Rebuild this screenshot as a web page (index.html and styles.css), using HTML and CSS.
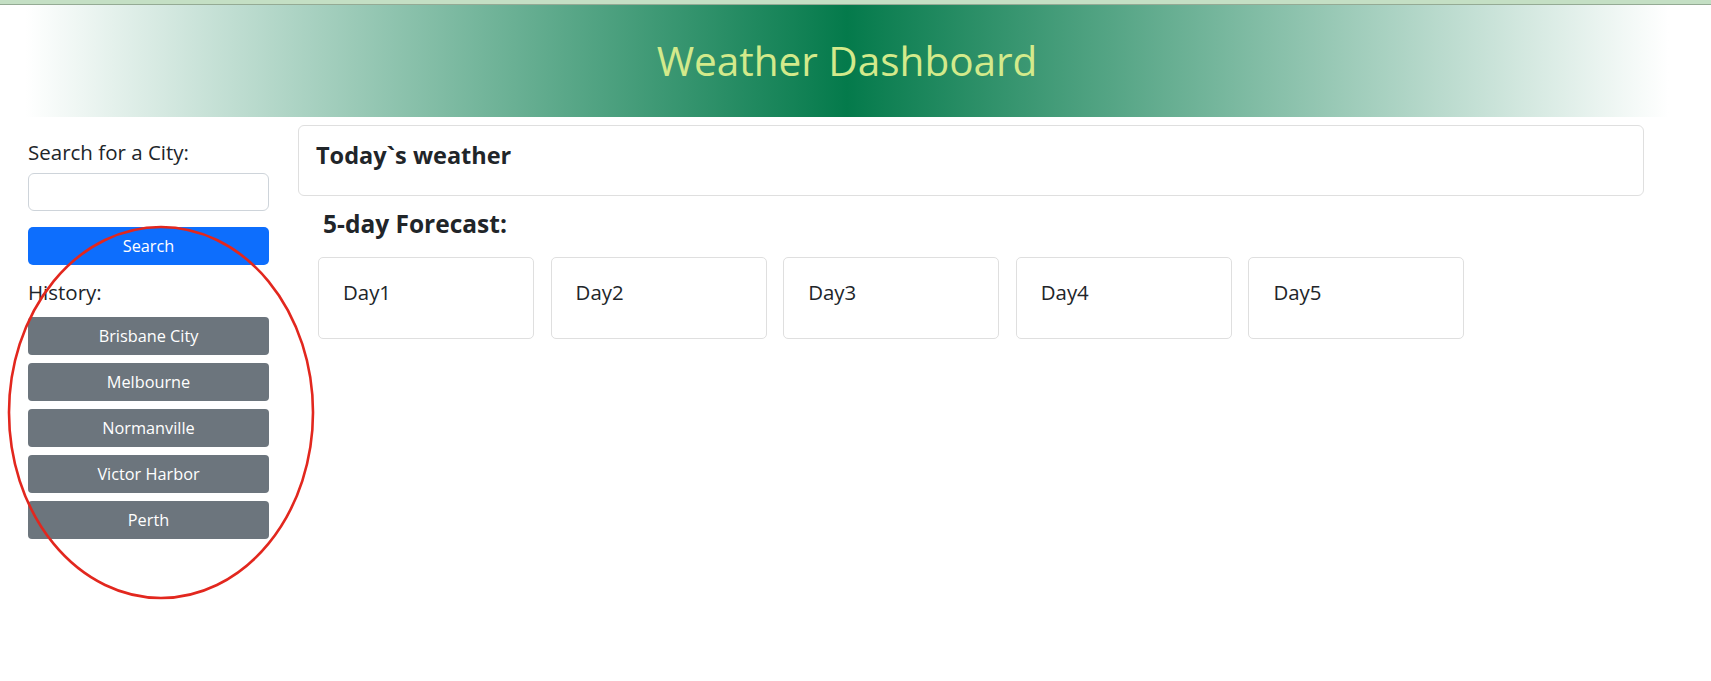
FILE: index.html
```html
<!DOCTYPE html>
<html lang="en">
<head>
<meta charset="utf-8">
<title>Weather Dashboard</title>
<link rel="stylesheet" href="styles.css">
</head>
<body>
<div class="topbar"></div>
<header class="banner">
  <h1 class="banner-title">Weather Dashboard</h1>
</header>
<main class="layout">
  <aside class="sidebar">
    <label class="side-label" for="city">Search for a City:</label>
    <input class="city-input" id="city" type="text">
    <button class="btn btn-search" type="button">Search</button>
    <div class="side-label history-label">History:</div>
    <div class="history">
      <button class="btn btn-history" type="button">Brisbane City</button>
      <button class="btn btn-history" type="button">Melbourne</button>
      <button class="btn btn-history" type="button">Normanville</button>
      <button class="btn btn-history" type="button">Victor Harbor</button>
      <button class="btn btn-history" type="button">Perth</button>
    </div>
  </aside>
  <section class="content">
    <div class="today-card">
      <h2 class="today-title">Today`s weather</h2>
    </div>
    <h3 class="forecast-title">5-day Forecast:</h3>
    <div class="forecast">
      <div class="day-card">Day1</div>
      <div class="day-card">Day2</div>
      <div class="day-card">Day3</div>
      <div class="day-card">Day4</div>
      <div class="day-card">Day5</div>
    </div>
  </section>
</main>
<svg class="annotation" width="330" height="610" viewBox="0 0 330 610" aria-hidden="true">
  <ellipse cx="161" cy="412.5" rx="152" ry="185.5" fill="none" stroke="#e2271e" stroke-width="2.6"/>
</svg>
</body>
</html>
```
FILE: styles.css
```css
* { box-sizing: border-box; }

html, body {
  margin: 0;
  padding: 0;
  background: #fff;
}

body {
  font-family: "Open Sans", "Noto Sans", "Liberation Sans", sans-serif;
  color: #212529;
  position: relative;
  min-height: 681px;
}

.topbar {
  height: 5px;
  background: #c4dfc4;
  border-bottom: 1px solid #94aa94;
}

.banner {
  height: 112px;
  margin-right: 17px;
  display: flex;
  align-items: center;
  justify-content: center;
  background: linear-gradient(to right, #ffffff 1.5%, #047a4b 50%, #ffffff 98.5%);
}

.banner-title {
  margin: 0;
  font-size: 40.5px;
  font-weight: 400;
  line-height: 1.2;
  color: #d3ea8b;
}

.layout {
  display: flex;
  align-items: flex-start;
  gap: 29px;
  padding: 8px 67px 0 28px;
}

.sidebar {
  width: 241px;
  flex: none;
  display: flex;
  flex-direction: column;
  padding-top: 12px;
}

.side-label {
  display: block;
  font-size: 20.5px;
  line-height: 30px;
  color: #212529;
}

.city-input {
  margin-top: 6px;
  height: 38px;
  width: 100%;
  border: 1px solid #ced4da;
  border-radius: 6px;
  background: #fff;
  font: inherit;
}

.btn {
  display: block;
  width: 100%;
  height: 38px;
  border: none;
  color: #fff;
  font-family: "Open Sans", "Noto Sans", sans-serif;
  font-size: 16.3px;
  text-align: center;
  padding: 0;
}

.btn-search {
  margin-top: 16px;
  background: #0d6efd;
  border-radius: 5px;
}

.history-label {
  margin-top: 12px;
}

.history {
  margin-top: 10px;
  display: flex;
  flex-direction: column;
  gap: 8px;
}

.btn-history {
  background: #6c757d;
  border-radius: 4px;
}

.content {
  flex: 1;
  min-width: 0;
}

.today-card {
  border: 1px solid #dfdfdf;
  border-radius: 6px;
  padding: 15px 17px 25px;
  height: 71px;
}

.today-title {
  margin: 0;
  font-size: 23.5px;
  font-weight: 700;
  line-height: 28px;
}

.forecast-title {
  margin: 14px 0 0;
  padding-left: 25px;
  font-size: 24.5px;
  font-weight: 700;
  line-height: 28px;
}

.forecast {
  display: flex;
  gap: 16.6px;
  padding-left: 20px;
  margin-top: 19px;
}

.day-card {
  width: 216px;
  height: 82px;
  border: 1px solid #dfdfdf;
  border-radius: 5px;
  padding: 19px 23px 30px 24px;
  font-size: 20.4px;
  line-height: 30px;
}

.annotation {
  position: absolute;
  left: 0;
  top: 0;
  pointer-events: none;
}
```
